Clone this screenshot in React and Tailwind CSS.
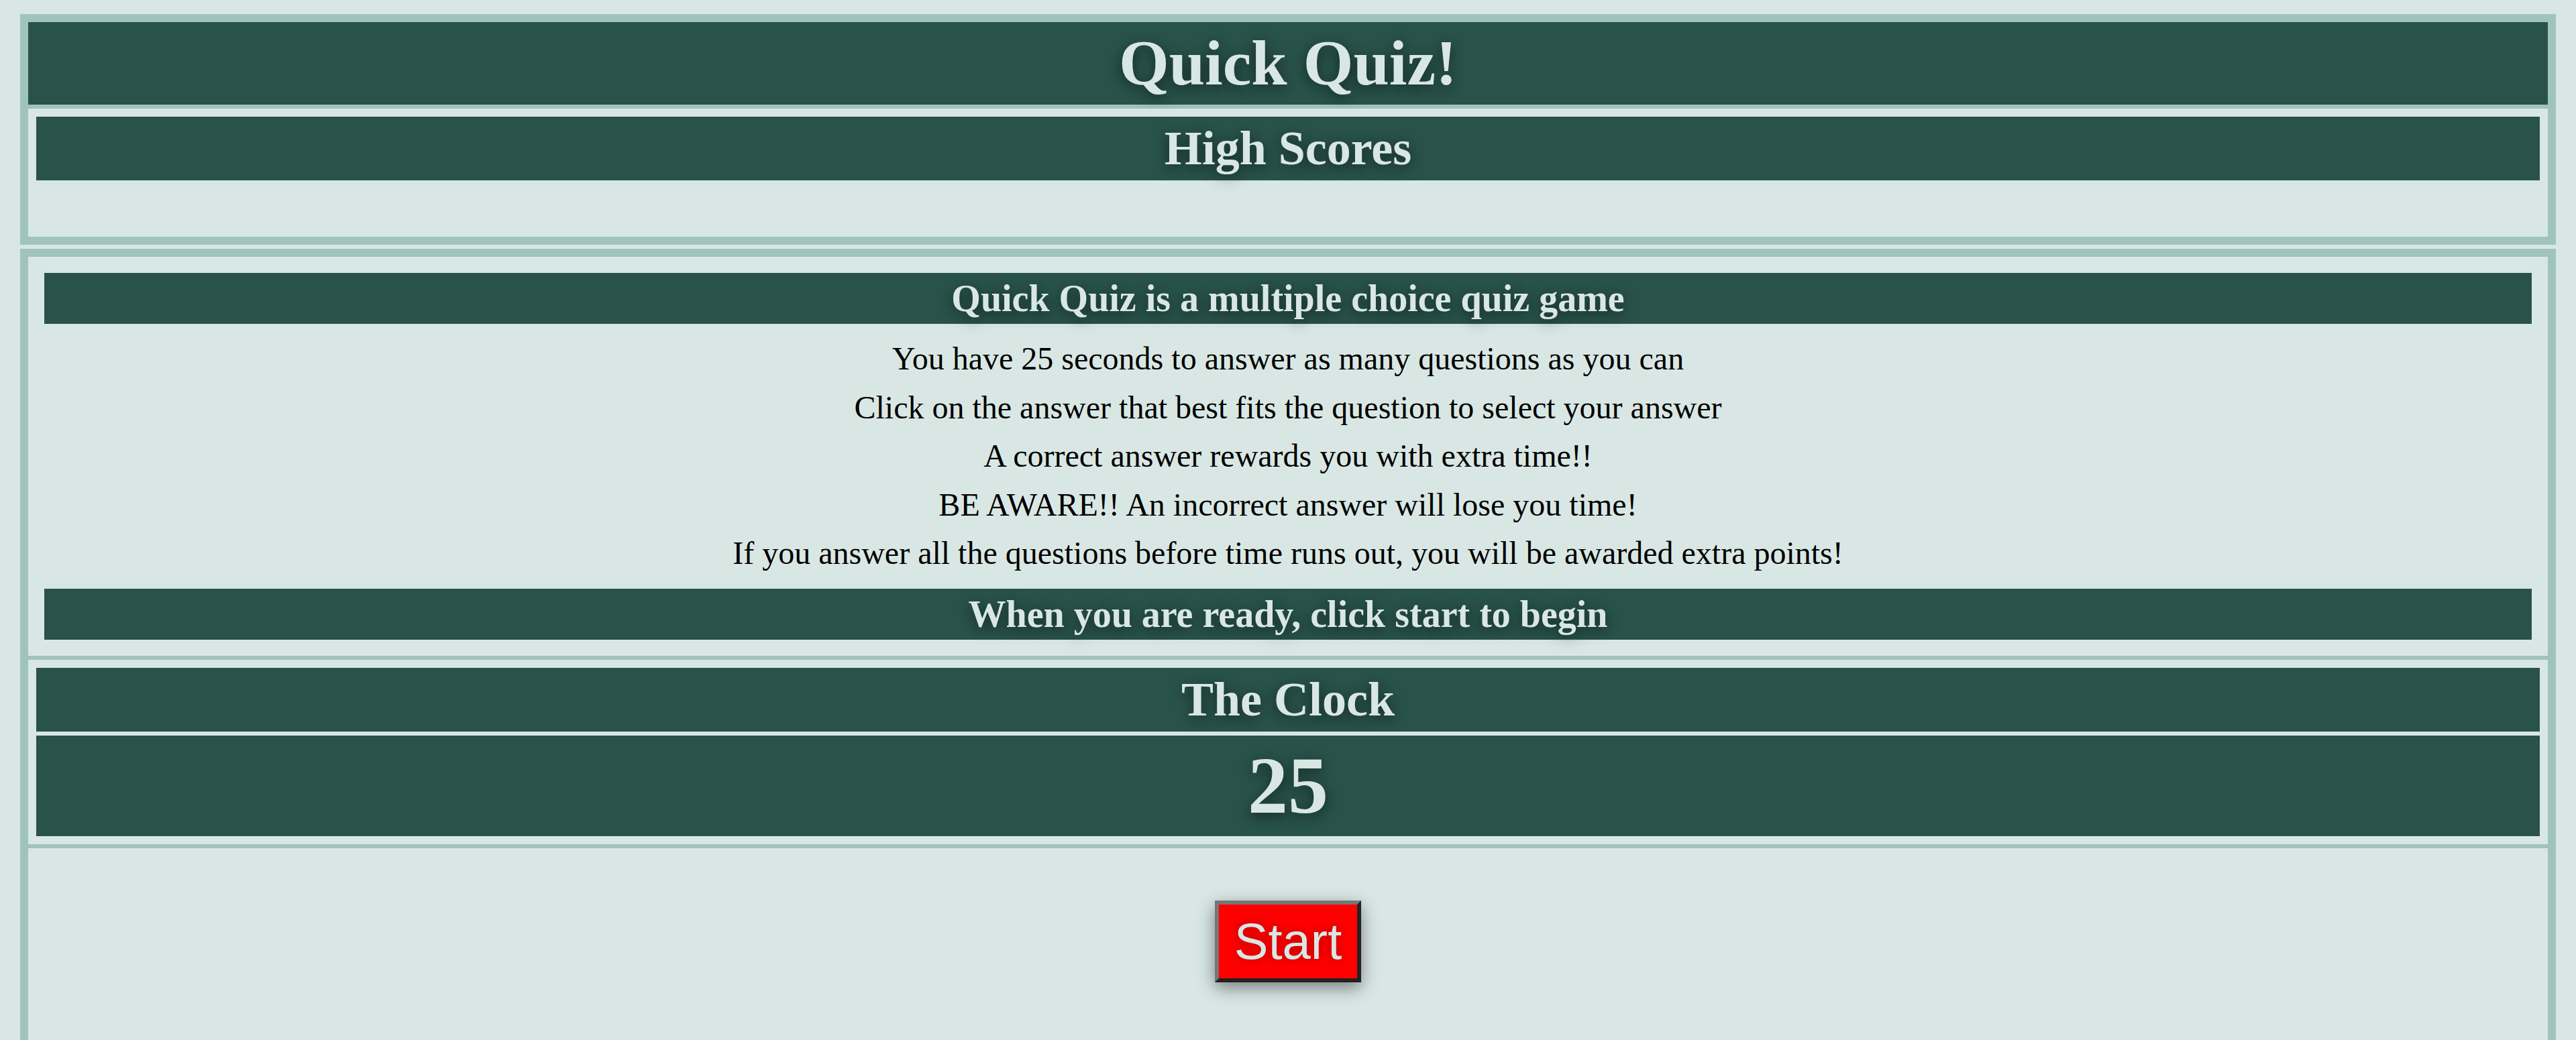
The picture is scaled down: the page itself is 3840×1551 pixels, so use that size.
export default function App() {
  const serif = "font-['Liberation_Serif','Times_New_Roman',serif]";
  const shadow = "[text-shadow:0_5px_20px_rgba(0,0,0,0.5)]";
  const lines = [
    "You have 25 seconds to answer as many questions as you can",
    "Click on the answer that best fits the question to select your answer",
    "A correct answer rewards you with extra time!!",
    "BE AWARE!! An incorrect answer will lose you time!",
    "If you answer all the questions before time runs out, you will be awarded extra points!",
  ];
  return (
    <div className={`min-h-screen bg-[#d9e7e4] px-[30px] pt-[21px] ${serif}`}>
      <div className="flex flex-col gap-[6px]">
        {/* Header box */}
        <header className="bg-[#a0c4bc] p-3 flex flex-col gap-[6px]">
          <h1 className={`h-[123px] bg-[#28524a] flex items-center justify-center text-[96px] leading-[1.149] font-bold text-[#d9e7e4] ${shadow}`}>
            Quick Quiz!
          </h1>
          <section className="bg-[#d9e7e4] p-3">
            <h2 className={`h-[95px] bg-[#28524a] flex items-center justify-center text-[72px] leading-[1.149] font-bold text-[#d9e7e4] ${shadow}`}>
              High Scores
            </h2>
            <div className="h-[72px]"></div>
          </section>
        </header>

        {/* Main box */}
        <main className="bg-[#a0c4bc] px-3 pt-3 flex flex-col gap-[6px]">
          <section className="bg-[#d9e7e4] p-6">
            <h3 className={`h-[76px] bg-[#28524a] flex items-center justify-center text-[56px] leading-[1.149] font-bold text-[#d9e7e4] ${shadow}`}>
              Quick Quiz is a multiple choice quiz game
            </h3>
            <div className="py-[16px] text-center text-[48px] leading-[72.6px] text-black">
              {lines.map((l) => (
                <p key={l}>{l}</p>
              ))}
            </div>
            <h3 className={`h-[76px] bg-[#28524a] flex items-center justify-center text-[56px] leading-[1.149] font-bold text-[#d9e7e4] ${shadow}`}>
              When you are ready, click start to begin
            </h3>
          </section>

          <section className="bg-[#d9e7e4] p-3 flex flex-col gap-[6px]">
            <h2 className={`h-[95px] bg-[#28524a] flex items-center justify-center text-[72px] leading-[1.149] font-bold text-[#d9e7e4] ${shadow}`}>
              The Clock
            </h2>
            <div className={`h-[150px] bg-[#28524a] flex items-center justify-center text-[120px] leading-[1.149] font-bold text-[#d9e7e4] ${shadow}`}>
              25
            </div>
          </section>

          <section className="bg-[#d9e7e4] pt-[78px] pb-[120px] flex justify-center">
            <button
              type="button"
              className="w-[218px] h-[122px] bg-[#ff0000] border-[6px] border-t-[#767676] border-l-[#767676] border-b-[#222222] border-r-[#222222] shadow-[0_8px_24px_rgba(0,0,0,0.45)] flex items-center justify-center font-['Liberation_Sans',Arial,sans-serif] text-[76px] leading-none text-[#d9e7e4] [text-shadow:0_0_14px_rgba(120,0,0,0.6)]"
            >
              Start
            </button>
          </section>
        </main>
      </div>
    </div>
  );
}
